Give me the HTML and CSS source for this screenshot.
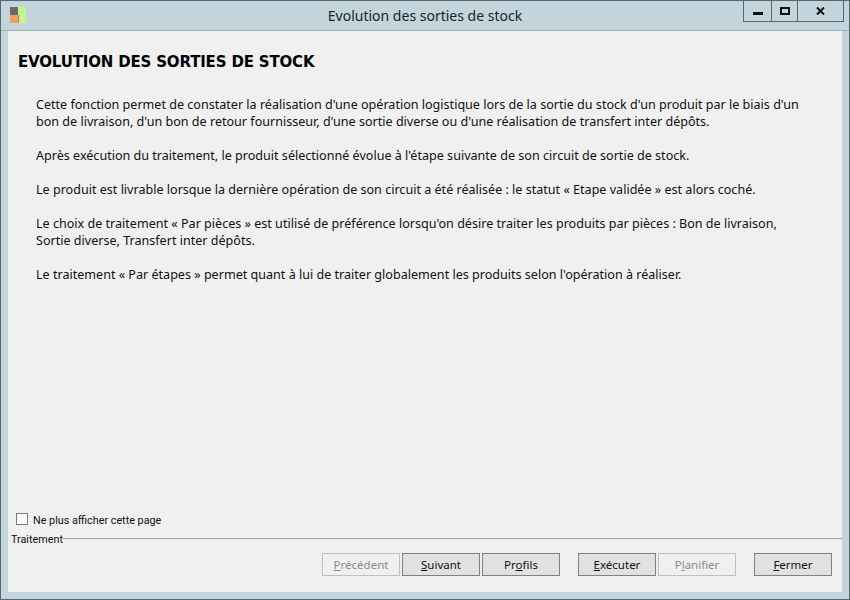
FILE: index.html
```html
<!DOCTYPE html>
<html lang="fr">
<head>
<meta charset="utf-8">
<title>Evolution des sorties de stock</title>
<link rel="stylesheet" href="styles.css">
</head>
<body>
<div class="window">
  <header class="titlebar">
    <svg class="app-icon" width="16" height="16" viewBox="0 0 16 16">
      <rect x="0" y="0" width="8" height="8" fill="#6b6b6b"/>
      <rect x="0" y="8" width="8" height="8" fill="#f79a63"/>
      <rect x="8" y="0" width="8" height="16" fill="#c6f58c"/>
      <rect x="8" y="8" width="1" height="8" fill="#8a8a7a"/>
    </svg>
    <div class="title">Evolution des sorties de stock</div>
    <div class="controls">
      <div class="ctl ctl-min"><span class="min-glyph"></span></div>
      <div class="ctl ctl-max"><span class="max-glyph"></span></div>
      <div class="ctl ctl-close">
        <svg width="9" height="8" viewBox="0 0 9 8"><path d="M1 0.5 L8 7.5 M8 0.5 L1 7.5" stroke="#111" stroke-width="2" fill="none"/></svg>
      </div>
    </div>
  </header>
  <main class="content">
    <h1 class="heading">EVOLUTION DES SORTIES DE STOCK</h1>
    <div class="text">
      <p>Cette fonction permet de constater la réalisation d'une opération logistique lors de la sortie du stock d'un produit par le biais d'un<br>bon de livraison, d'un bon de retour fournisseur, d'une sortie diverse ou d'une réalisation de transfert inter dépôts.</p>
      <p>Après exécution du traitement, le produit sélectionné évolue à l'étape suivante de son circuit de sortie de stock.</p>
      <p>Le produit est livrable lorsque la dernière opération de son circuit a été réalisée : le statut « Etape validée » est alors coché.</p>
      <p>Le choix de traitement « Par pièces » est utilisé de préférence lorsqu'on désire traiter les produits par pièces : Bon de livraison,<br>Sortie diverse, Transfert inter dépôts.</p>
      <p>Le traitement « Par étapes » permet quant à lui de traiter globalement les produits selon l'opération à réaliser.</p>
    </div>
    <label class="check"><span class="box"></span><span class="check-label">Ne plus afficher cette page</span></label>
    <div class="legend"><span class="legend-label">Traitement</span><span class="rule"></span></div>
    <div class="buttons">
      <div class="group">
        <div class="btn off"><span><u>P</u>récédent</span></div>
        <div class="btn"><span><u>S</u>uivant</span></div>
        <div class="btn"><span>Pr<u>o</u>fils</span></div>
      </div>
      <div class="group">
        <div class="btn"><span><u>E</u>xécuter</span></div>
        <div class="btn off"><span>P<u>l</u>anifier</span></div>
      </div>
      <div class="group">
        <div class="btn"><span><u>F</u>ermer</span></div>
      </div>
    </div>
  </main>
</div>
</body>
</html>
```
FILE: styles.css
```css
* { box-sizing: border-box; }
html, body { margin: 0; padding: 0; }
body { width: 850px; height: 600px; overflow: hidden; font-family: "Noto Sans", "DejaVu Sans", sans-serif; color: #111; }
.window { width: 850px; height: 600px; display: flex; flex-direction: column; background: #c2d5dc; border: 1px solid #59666c; }
.titlebar { height: 30px; flex: none; display: flex; align-items: flex-start; position: relative; border-bottom: 1px solid #a3b2b9; }
.app-icon { margin: 6px 0 0 9px; }
.title { position: absolute; left: 0; right: 0; top: 5px; text-align: center; font-size: 14px; line-height: 20px; color: #222; }
.controls { position: absolute; top: -1px; left: 742px; display: flex; height: 22px; border: 1px solid #59666c; border-top: 0; }
.ctl { display: flex; align-items: center; justify-content: center; border-left: 1px solid #59666c; }
.ctl:first-child { border-left: 0; }
.ctl-min { width: 27px; }
.ctl-max { width: 26px; }
.ctl-close { width: 46px; }
.min-glyph { width: 10px; height: 3px; background: #111; margin-top: 5px; }
.max-glyph { width: 10px; height: 8px; border: 2px solid #111; }
.content { flex: 1; margin: 0 7px 7px; background: #f0f0f0; display: flex; flex-direction: column; min-height: 0; }
.heading { margin: 21px 0 0 10px; font-family: "DejaVu Sans", sans-serif; font-weight: 700; font-size: 15px; letter-spacing: -0.17px; line-height: 20px; color: #000; }
.text { flex: 1; margin: 24px 0 0 28px; font-size: 12.57px; line-height: 17px; }
.text p { margin: 0 0 17px; white-space: nowrap; }
.check { display: flex; align-items: flex-start; gap: 5px; margin-left: 8px; font-family: Roboto, sans-serif; font-size: 10.8px; line-height: 14px; height: 14px; }
.check-label { margin-top: 1px; }
.box { width: 12px; height: 12px; background: #fbfbfb; border: 1px solid #7a7a7a; }
.legend { display: flex; align-items: flex-start; height: 14px; margin: 5px 0 0 3px; font-family: Roboto, sans-serif; font-size: 10.8px; line-height: 14px; }
.legend-label { margin-top: 1px; }
.rule { flex: 1; height: 1px; margin-top: 6px; background: #a0a0a0; }
.buttons { display: flex; justify-content: flex-end; gap: 18px; margin: 7px 10px 16px 0; }
.group { display: flex; gap: 2px; }
.btn { width: 78px; height: 23px; display: flex; align-items: center; justify-content: center; white-space: pre; font-size: 11.5px; background: #e1e1e1; border: 1px solid #808080; color: #111; }
.btn.off { background: #f0f0f0; border-color: #c0c0c0; color: #8a8a8a; }
```
